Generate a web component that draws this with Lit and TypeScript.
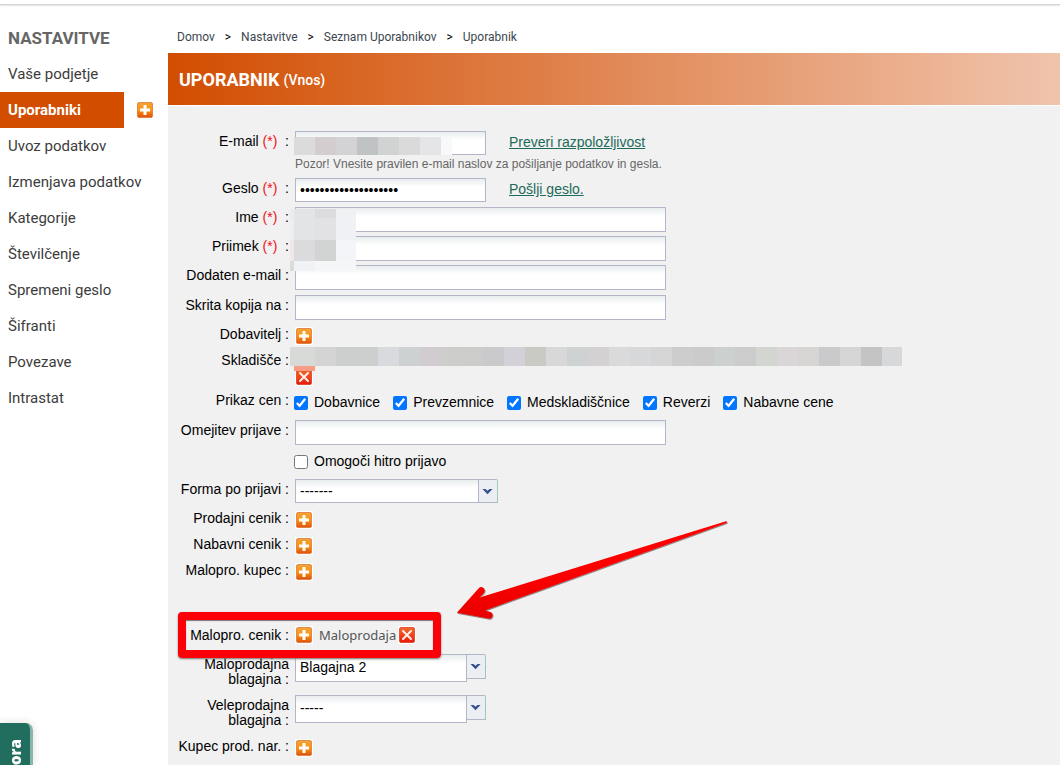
import { LitElement, html, css, svg, nothing } from "lit";
import { customElement, property } from "lit/decorators.js";

const NAV = [
  "Vaše podjetje",
  "Uporabniki",
  "Uvoz podatkov",
  "Izmenjava podatkov",
  "Kategorije",
  "Številčenje",
  "Spremeni geslo",
  "Šifranti",
  "Povezave",
  "Intrastat",
];
const CRUMBS = ["Domov", "Nastavitve", "Seznam Uporabnikov", "Uporabnik"];
const PRICES = ["Dobavnice", "Prevzemnice", "Medskladiščnice", "Reverzi", "Nabavne cene"];

const EMAIL_MASK = ["#dcdbdc", "#d4cdcf", "#d3d3d6", "#bfc3c4", "#d1d3d2", "#dadada", "#e5e5e8", "#f8f9fb"];
const STOCK_MASK = [
  "#d8dad8", "#d3d4d3", "#cdcfcf", "#cdcfcf", "#d8dadd", "#cdd1d2", "#d0cccf", "#cdcdcb", "#cccdca",
  "#cac9cb", "#d3d1d7", "#c9cac4", "#d8d8d8", "#ced2d2", "#d3d1d1", "#dadada", "#d7d8da", "#d6d5d5", "#cecdce",
  "#cbcbcb", "#ccd0ce", "#cdcccc", "#d2d5d0", "#dad5d6", "#d6d5d4", "#cacacc", "#d5d5d5", "#c4c4c4", "#d7d8da",
];

@customElement("square-icon")
export class SquareIcon extends LitElement {
  @property() kind = "add";

  static styles = css`
    :host { display: block; width: 18px; height: 18px; flex: none; }
    svg { display: block; }
  `;

  render() {
    const add = this.kind === "add";
    return html`<svg width="18" height="18" viewBox="0 0 18 18" aria-hidden="true">
      <defs>
        <linearGradient id="fill" x1="0" y1="0" x2="0" y2="1">
          <stop offset="0" stop-color=${add ? "#f2a23a" : "#ee6a2e"} />
          <stop offset="0.5" stop-color=${add ? "#fb9410" : "#f4421c"} />
          <stop offset="1" stop-color=${add ? "#e0500c" : "#e8180a"} />
        </linearGradient>
      </defs>
      <rect width="18" height="18" fill="#fff" />
      <rect x="1.5" y="1.5" width="15" height="15" rx="1.5" fill="url(#fill)"
        stroke=${add ? "#dc7430" : "#dc3a20"} stroke-opacity="0.75" />
      ${add
        ? svg`<path d="M7.5 4h3v3.5H14v3h-3.500V14h-3v-3.500H4v-3h3.500z" fill="#fff" />`
        : svg`<path d="M5 5l8 8M13 5l-8 8" stroke="#fff3e6" stroke-width="2" stroke-linecap="round" />`}
    </svg>`;
  }
}

@customElement("form-row")
export class FormRow extends LitElement {
  @property() label = "";
  @property({ type: Boolean }) required = false;

  static styles = css`
    :host { display: grid; grid-template-columns: 122px minmax(0, 1fr); column-gap: 5px; align-items: start; position: relative; min-height: 29px; }
    .label { text-align: right; line-height: 15px; padding: 3px 1px 0 8px; white-space: pre-wrap; }
    .star { color: #f01020; }
  `;

  render() {
    return html`<div class="label">${this.required
        ? html`${this.label} <span class="star">(*)</span>  :`
        : this.label ? `${this.label} :` : nothing}</div>
      <slot></slot>`;
  }
}

@customElement("app-root")
export class AppRoot extends LitElement {
  static styles = css`
    :host { display: block; position: relative; min-height: 100vh; overflow: hidden; background: #fff; color: #000; font: 14px/15px "Liberation Sans", Arial, sans-serif; }
    * { box-sizing: border-box; }
    .page { display: flex; flex-direction: column; min-height: 100vh; }
    .topbar { height: 5px; border-bottom: 1px solid #d5d5d5; box-shadow: 0 1px 2px #e2e2e2; flex: none; }
    .body { flex: 1; display: grid; grid-template-columns: 168px minmax(0, 1fr); }

    .side { font: 15px/36px Roboto, sans-serif; padding-top: 16px; }
    .side h2 { margin: 0; padding-left: 8px; font-size: 17px; line-height: 35px; font-weight: 700; color: #666; }
    .side ul { list-style: none; margin: 0; padding: 0; }
    .side li { display: flex; align-items: center; gap: 12px; height: 36px; }
    .side a { color: #3c3c3c; text-decoration: none; padding-left: 8px; white-space: nowrap; }
    .side .active { width: 124px; background: #d24d00; color: #fff; font-weight: 700; }

    .main { display: flex; flex-direction: column; }
    .crumbs { display: flex; gap: 10px; padding: 22px 9px 6px; font: 12px/20px Roboto, sans-serif; color: #000; }
    .crumbs a { color: #3c4650; text-decoration: none; }
    .title { margin: 0 0 1px; height: 52px; display: flex; align-items: center; gap: 4px; padding: 2px 0 0 11px; color: #fff; font: 700 18px/24px Roboto, sans-serif; background: linear-gradient(90deg, #d24d00, #f0c4ac); }
    .title small { font-size: 14px; font-weight: 500; }
    .form { flex: 1; background: #f1f1f1; padding-top: 25px; }

    button { border: 0; padding: 0; background: none; cursor: pointer; display: block; }
    .field { height: 25px; width: 371px; border: 1px solid #b3b5c9; background: #fff linear-gradient(#e8eded, #fff 8px) no-repeat; padding: 0 4px; margin: 0; font: inherit; color: #000; border-radius: 0; outline: none; display: block; }
    .short { width: 191px; height: 24px; }
    .line { display: flex; align-items: flex-start; gap: 23px; }
    .line a { color: #1b6a5a; line-height: 16px; padding-top: 3px; }
    .note { margin: 0; font-size: 12px; line-height: 18px; color: #666; }
    .email { min-height: 47px; }
    .extra { min-height: 30px; }
    .icon { min-height: 26px; }
    .icon button { margin-top: 3px; }
    .stock { min-height: 40px; }
    .stock button { margin-top: 18px; }
    .checks { min-height: 30px; }
    .checklist { display: flex; flex-wrap: wrap; gap: 13px; padding-top: 4px; margin-left: -1px; }
    .checklist label { display: flex; align-items: center; gap: 6px; }
    .checklist input { width: 14px; height: 14px; margin: 2px 0 0; }

    .combo { display: flex; align-items: flex-start; width: 191px; }
    .combo select { appearance: none; flex: 1; min-width: 0; width: auto; height: 28px; padding-bottom: 1px; }
    .combo .arrow { flex: none; width: 19px; height: 25px; padding-right: 1px; border: 1px solid #b3b5c9; border-left: 0; border-right-color: #9fcbb4; border-radius: 0 2px 0 0; background: #ebeef2; display: grid; place-items: center; pointer-events: none; }
    .wide { width: 203px; }
    .wide select { height: 24px; padding-bottom: 0; }
    .wide .arrow { height: 24px; }
    .till { min-height: 41px; }

    .picked { margin-top: 39px; min-height: 29px; }
    .value { display: flex; align-items: center; padding-top: 1px; font: 13px/18px "Noto Sans", sans-serif; color: #555; }
    .value span { padding: 0 2px 0 6px; }
    .frame { position: absolute; left: 10px; top: -13px; width: 263px; height: 46px; border: 8px solid #fb0007; border-radius: 4px; box-shadow: 0 1px 2px #777, inset 0 1px 1px #777; pointer-events: none; z-index: 2; }
    .pointer { position: absolute; left: 285px; top: -111px; z-index: 2; pointer-events: none; }

    .mask { position: absolute; display: flex; pointer-events: none; z-index: 1; }
    .mask i { width: 21px; flex: none; }
    .mask-email { left: 126px; top: 6px; height: 18px; }
    .mask-email i:last-child { width: 11px; }
    .mask-name { left: 122px; top: 2px; }
    .mask-stock { left: 122px; top: -3px; height: 19px; }
    .mask-stock i:first-child { width: 25px; }
    .mask-stock i:last-child { width: 20px; }
    .mask-cap { left: 126px; top: 16px; width: 21px; height: 5px; background: #f79c85; }

    .tab { position: absolute; left: 0; bottom: 0; width: 33px; height: 42px; background: #216e5f; border-right: 3px solid #8ab5aa; border-radius: 0 7px 0 0; box-shadow: 0 0 10px #ddd; color: #fff; display: flex; justify-content: center; padding-top: 18px; }
    .tab span { writing-mode: vertical-rl; transform: rotate(180deg); font: 800 15px/20px "Open Sans", sans-serif; }
  `;

  private input(label: string) {
    return html`<input class="field" aria-label=${label} />`;
  }

  private addRow(label: string) {
    return html`<form-row class="icon" label=${label}>
      <button type="button" aria-label=${label}><square-icon></square-icon></button>
    </form-row>`;
  }

  private combo(label: string, value: string, wide = false) {
    return html`<form-row class=${wide ? "" : "till"} label=${label}>
      <div class="combo ${wide ? "wide" : ""}">
        <select class="field" aria-label=${label}><option>${value}</option></select>
        <span class="arrow"><svg width="11" height="7" viewBox="0 0 11 7"><path d="M.5 1h3l2 1.800L7.500 1h3L5.500 6.300z" fill="#34508f" /></svg></span>
      </div>
    </form-row>`;
  }

  private nameMask() {
    const rows: [number, string[]][] = [
      [9, ["#eceaeb", "#e3e4e6", "#dcdcdf", "#f0f1f3"]],
      [22, ["#eeeeef", "#e3e4e6", "#e2e2e4", "#f0f1f4"]],
      [21, ["#f1e7e9", "#dbdadc", "#d2d4d3", "#f4f5f8"]],
      [10, ["#dbdbdb", "#f1f2f5", "#f5f6f8", "#f5f6f8"]],
    ];
    const xs = [0, 4, 25, 46, 66];
    let y = 0;
    return html`<svg class="mask mask-name" width="66" height="62">${rows.map(([h, colors]) => {
      const top = y;
      y += h;
      return colors.map((c, i) => svg`<rect x=${xs[i]} y=${top} width=${xs[i + 1] - xs[i]} height=${h} fill=${c} />`);
    })}</svg>`;
  }

  render() {
    return html`
      <div class="page">
        <div class="topbar"></div>
        <div class="body">
          <nav class="side">
            <h2>NASTAVITVE</h2>
            <ul>
              ${NAV.map((n) => n === "Uporabniki"
                ? html`<li><a class="active" href="#">${n}</a><button type="button" aria-label="Dodaj"><square-icon></square-icon></button></li>`
                : html`<li><a href="#">${n}</a></li>`)}
            </ul>
          </nav>
          <main class="main">
            <div class="crumbs">${CRUMBS.map((c, i) => html`${i ? html`<span>&gt;</span>` : nothing}<a href="#">${c}</a>`)}</div>
            <h1 class="title">UPORABNIK <small>(Vnos)</small></h1>
            <form class="form">
              <form-row class="email" label="E-mail" required>
                <div>
                  <div class="line"><input class="field short" type="email" aria-label="E-mail" /><a href="#">Preveri razpoložljivost</a></div>
                  <p class="note">Pozor! Vnesite pravilen e-mail naslov za pošiljanje podatkov in gesla.</p>
                  <div class="mask mask-email">${EMAIL_MASK.map((c) => html`<i style="background:${c}"></i>`)}</div>
                </div>
              </form-row>
              <form-row label="Geslo" required>
                <div class="line"><input class="field short" type="password" aria-label="Geslo" .value=${"x".repeat(20)} /><a href="#">Pošlji geslo.</a></div>
              </form-row>
              <form-row label="Ime" required>${this.input("Ime")}${this.nameMask()}</form-row>
              <form-row label="Priimek" required>${this.input("Priimek")}</form-row>
              <form-row class="extra" label="Dodaten e-mail">${this.input("Dodaten e-mail")}</form-row>
              <form-row label="Skrita kopija na">${this.input("Skrita kopija na")}</form-row>
              ${this.addRow("Dobavitelj")}
              <form-row class="stock" label="Skladišče">
                <div>
                  <button type="button" aria-label="Odstrani skladišče"><square-icon kind="remove"></square-icon></button>
                  <div class="mask mask-stock">${STOCK_MASK.map((c) => html`<i style="background:${c}"></i>`)}</div>
                  <div class="mask mask-cap"></div>
                </div>
              </form-row>
              <form-row class="checks" label="Prikaz cen">
                <div class="checklist">${PRICES.map((p) => html`<label><input type="checkbox" checked />${p}</label>`)}</div>
              </form-row>
              <form-row label="Omejitev prijave">${this.input("Omejitev prijave")}</form-row>
              <form-row class="checks">
                <div class="checklist"><label><input type="checkbox" />Omogoči hitro prijavo</label></div>
              </form-row>
              ${this.combo("Forma po prijavi", "-------", true)}
              ${this.addRow("Prodajni cenik")}
              ${this.addRow("Nabavni cenik")}
              ${this.addRow("Malopro. kupec")}
              <form-row class="picked" label="Malopro. cenik">
                <div class="value">
                  <button type="button" aria-label="Dodaj cenik"><square-icon></square-icon></button>
                  <span>Maloprodaja</span>
                  <button type="button" aria-label="Odstrani cenik"><square-icon kind="remove"></square-icon></button>
                  <div class="frame"></div>
                  <svg class="pointer" width="280" height="110" viewBox="0 0 280 110">
                    <defs>
                      <linearGradient id="red" x1="0" y1="0" x2="0.15" y2="1"><stop offset="0.5" stop-color="#ff0505" /><stop offset="1" stop-color="#e80000" /></linearGradient>
                      <filter id="drop" x="-5%" y="-5%" width="110%" height="115%"><feDropShadow dx="0.500" dy="1" stdDeviation="0.600" flood-color="#333" flood-opacity="0.600" /></filter>
                    </defs>
                    <path filter="url(#drop)" fill="url(#red)" d="M4.500 98L25.500 74.500Q28 72 30.500 74Q33 76 31 79L26.500 83.500L273 7.200Q275 7.500 273.500 9L32 96.500L37.500 98Q40.500 99.500 39.500 102.500Q38.500 105.500 35 104.500L5 99Q3.500 98.500 4.500 98Z" />
                  </svg>
                </div>
              </form-row>
              ${this.combo("Maloprodajna blagajna", "Blagajna 2")}
              ${this.combo("Veleprodajna blagajna", "-----")}
              ${this.addRow("Kupec prod. nar.")}
            </form>
          </main>
        </div>
      </div>
      <div class="tab"><span>ora</span></div>
    `;
  }
}
